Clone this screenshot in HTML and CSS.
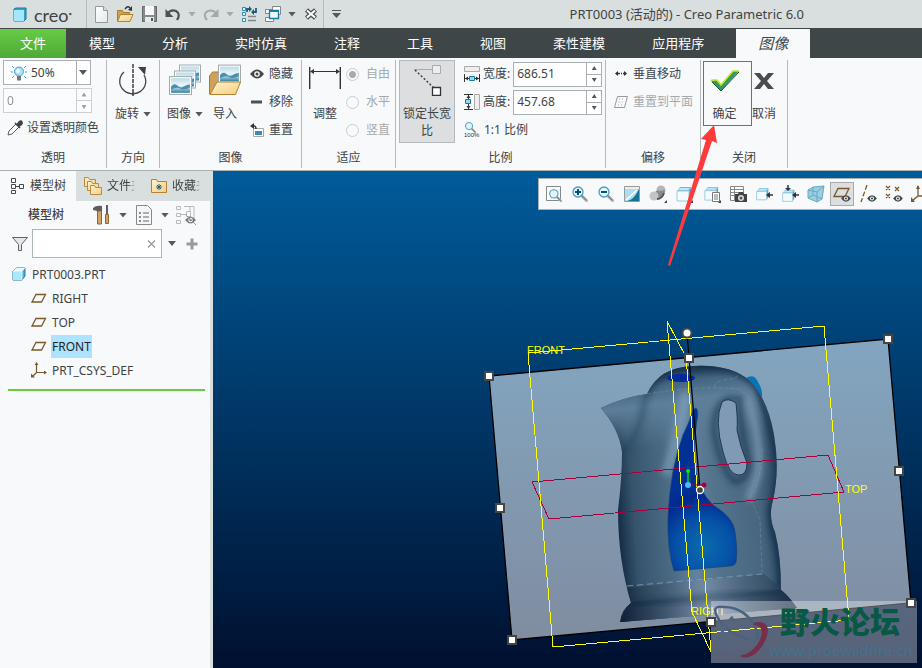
FILE: index.html
```html
<!DOCTYPE html>
<html lang="zh-CN">
<head>
<meta charset="utf-8">
<title>PRT0003 (活动的) - Creo Parametric 6.0</title>
<link rel="stylesheet" href="styles.css">
</head>
<body>
<svg class="defs" aria-hidden="true">
  <defs>
    <linearGradient id="landscape" x1="0" y1="0" x2="0" y2="1">
      <stop offset="0" stop-color="#b9dcea"/><stop offset=".5" stop-color="#eef6f8"/><stop offset="1" stop-color="#2f7fa3"/>
    </linearGradient>
    <linearGradient id="paper" x1="0" y1="0" x2="1" y2="1">
      <stop offset="0" stop-color="#fff"/><stop offset="1" stop-color="#e4eaec"/>
    </linearGradient>
    <linearGradient id="folder" x1="0" y1="0" x2="1" y2="1">
      <stop offset="0" stop-color="#fff3cf"/><stop offset="1" stop-color="#f3cd80"/>
    </linearGradient>
    <symbol id="photo" viewBox="0 0 22 18">
      <rect x=".5" y=".5" width="21" height="17" fill="#fff" stroke="#a5a9ab"/>
      <rect x="2" y="2" width="18" height="14" fill="url(#landscape)"/>
      <path d="M2 10q3-4 6-1t6 1 6-2v3q-5 3-9 1t-9 1z" fill="#4a8fae"/>
    </symbol>
    <symbol id="cube" viewBox="0 0 16 16">
      <path d="M2 5l3-3h9v8l-3 4H2z" fill="#4fb4db" stroke="#1d7ea5"/>
      <path d="M2 5h9v9H2z" fill="#aee6fb"/><path d="M2 5l3-3h9l-3 3z" fill="#e2f7ff"/>
      <path d="M2 5h9v9M11 5l3-3" fill="none" stroke="#fff" stroke-width=".7"/>
    </symbol>
    <symbol id="plane" viewBox="0 0 16 16">
      <path d="M5 4.500h9.500l-4 7.500H1z" fill="none" stroke="#7a5a2a" stroke-width="1.300"/>
    </symbol>
    <symbol id="eye" viewBox="0 0 14 10">
      <path d="M0 5q7-9 14 0-7 9-14 0z" fill="#434849"/><circle cx="7" cy="5" r="2.800" fill="#fff"/><circle cx="7" cy="5" r="1.500" fill="#434849"/>
    </symbol>
    <symbol id="lens" viewBox="0 0 18 18">
      <path d="M10.500 10.500l5 5" stroke="#a8adaf" stroke-width="3" stroke-linecap="round"/>
      <path d="M10 10l5 5" stroke="#777" stroke-width="1"/>
      <circle cx="7" cy="7" r="5" fill="#dff4fd" stroke="#4b9dbd" stroke-width="1.300"/>
    </symbol>
    <symbol id="block" viewBox="0 0 18 18">
      <path d="M2 6l3-4h11l-2 4v10H2z" fill="#6cbbd8"/><path d="M16 2v11l-2 3V6z" fill="#58a4c2"/><path d="M2 6h12v10H2z" fill="#f4fbfe" stroke="#9ccbdc"/><path d="M3 5l2-2h10l-2 2z" fill="#c2e8f5"/>
    </symbol>
  </defs>
</svg>

<div class="app">
  <header class="titlebar">
    <div class="brand">
      <svg class="i16" viewBox="0 0 16 16"><path d="M2 3l2-1h10v11l-2 2H2z" fill="#3aa0c6" stroke="#17799f"/><path d="M2 4h10v11H2z" fill="#a5e6ff"/></svg>
      <span class="brand-name">creo<sup>•</sup></span>
    </div>
    <div class="quick">
      <button class="qb" aria-label="新建"><svg class="i18" viewBox="0 0 18 18"><path d="M3.500 1.500h8l4 4v12h-12z" fill="url(#paper)" stroke="#94999b"/><path d="M11.500 1.500v4h4" fill="#ddd" stroke="#94999b"/></svg></button>
      <button class="qb" aria-label="打开"><svg class="i18" viewBox="0 0 18 18"><path d="M1.500 16V5.500h5l1 2h6V16z" fill="#d3a04f" stroke="#a97b31"/><path d="M1.500 16.500l3-7h12.500l-3 7z" fill="url(#folder)" stroke="#b38334"/><path d="M9 4q3-4 5-1" fill="none" stroke="#333" stroke-width="1.500"/><path d="M12 5l4 1V1z" fill="#333"/></svg></button>
      <button class="qb" aria-label="保存"><svg class="i18" viewBox="0 0 18 18"><path d="M2.500 1.500h14v15h-14z" fill="#868b8d" stroke="#63686a"/><path d="M5 1h9v9H5z" fill="#f7f7f7"/><path d="M5 12h9v5H5z" fill="#e6e9ea"/><path d="M11 13h2v3h-2z" fill="#555"/></svg></button>
      <button class="qb" aria-label="撤消"><svg class="i18" viewBox="0 0 18 18"><path d="M3 9q4-5 9-3 5 3 1 9" fill="none" stroke="#4c5153" stroke-width="2.200"/><path d="M1.500 4v8h8z" fill="#4c5153"/></svg></button>
      <button class="qc" aria-label="撤消列表"><i class="caret soft"></i></button>
      <button class="qb" aria-label="重做"><svg class="i18" viewBox="0 0 18 18"><path d="M15 9q-4-5-9-3-6 3-1 9" fill="none" stroke="#a3a9aa" stroke-width="2"/><path d="M16.500 4v8h-8z" fill="#a3a9aa"/></svg></button>
      <button class="qc" aria-label="重做列表"><i class="caret soft"></i></button>
      <button class="qb" aria-label="重新生成"><svg class="i18" viewBox="0 0 18 18"><path d="M2.500 2.500h3v3h-3zM2.500 7.500h3v3h-3zM2.500 13.500h3v3h-3z" fill="#e8f8ff" stroke="#2a8db5"/><path d="M8 11.500h8M8 15.500h8" stroke="#83888a" stroke-width="1.300"/><path d="M7 7V4h3M16 3v4h-3" fill="none" stroke="#16617f" stroke-width="1.800"/><path d="M9 1l3 3-3 3zM14 4l-3 3 3 3z" fill="#16617f"/></svg></button>
      <button class="qb" aria-label="窗口"><svg class="i18" viewBox="0 0 18 18"><path d="M8.500 1.500h8v8h-8zM1.500 4.500h6v4h-6zM1.500 12.500h8v4h-8z" fill="#fff" stroke="#83888a"/><path d="M5.500 5.500h9v8h-9z" fill="#eaf8ff" stroke="#1b7ba1" stroke-width="1.300"/><path d="M5 5h10v2H5z" fill="#1b7ba1"/></svg></button>
      <button class="qc" aria-label="窗口列表"><i class="caret"></i></button>
      <button class="qb" aria-label="关闭"><svg class="i18" viewBox="0 0 18 18"><path d="M4.500 5l9 8M13.500 5l-9 8" stroke="#4c5153" stroke-width="4.500"/><path d="M5 5.500l8 7M13 5.500l-8 7" stroke="#fff" stroke-width="2"/></svg></button>
      <button class="qc more" aria-label="自定义快速访问工具栏"><i class="caret bar"></i></button>
    </div>
    <h1 class="title">PRT0003 (活动的) - Creo Parametric 6.0</h1>
  </header>

  <nav class="tabs">
    <a class="tab file" href="#">文件</a><a class="tab" href="#">模型</a><a class="tab" href="#">分析</a><a class="tab" href="#">实时仿真</a><a class="tab" href="#">注释</a><a class="tab" href="#">工具</a><a class="tab" href="#">视图</a><a class="tab" href="#">柔性建模</a><a class="tab" href="#">应用程序</a><a class="tab active" href="#">图像</a>
  </nav>

  <section class="ribbon">
    <div class="group">
      <div class="rows">
        <div class="combo">
          <svg class="i16" viewBox="0 0 16 16"><circle cx="8" cy="6.500" r="4.500" fill="#a9e2fa" stroke="#3ba6d2"/><circle cx="7" cy="6" r="2" fill="#fff"/><path d="M6 11h4v4.500H6z" fill="#777"/><path d="M1 1l2 2M0 7h2M15 1l-2 2M16 7h-2M1 13l2-2M15 13l-2-2" stroke="#3ba6d2"/></svg>
          <select aria-label="透明度"><option>50%</option></select><i class="caret"></i>
        </div>
        <div class="spin off"><input aria-label="数值" value="0" disabled><span class="arrows"><button aria-label="增加" disabled></button><button aria-label="减少" disabled></button></span></div>
        <button class="small wide"><svg class="i18" viewBox="0 0 18 18"><path d="M2 16l1-4 7-7 3 3-7 7z" fill="#fff" stroke="#55595b"/><path d="M9 4l5 5M11 6l2-3q2-2 3 0t-3 4z" fill="#3e4345" stroke="#3e4345" stroke-width="1.500"/></svg>设置透明颜色</button>
      </div>
      <h2>透明</h2>
    </div>
    <div class="group">
      <div class="bigs mid">
        <button class="big"><svg class="i32" viewBox="0 0 32 32"><path d="M7 8A13 12.500 0 1 0 27 11" fill="none" stroke="#44494b" stroke-width="1.300"/><path d="M16 0v32" stroke="#222" stroke-width="1.300" stroke-dasharray="4 1"/><path d="M21 3h8l-1 8z" fill="#3e4345"/></svg><span>旋转<i class="caret"></i></span></button>
      </div>
      <h2>方向</h2>
    </div>
    <div class="group">
      <div class="bigs pics">
        <button class="big"><svg class="i32" viewBox="0 0 32 32"><use href="#photo" x="10" y="0" width="22" height="19"/><use href="#photo" x="5" y="6" width="22" height="19"/><use href="#photo" x="0" y="12" width="23" height="19"/></svg><span>图像<i class="caret"></i></span></button>
        <button class="big"><svg class="i32" viewBox="0 0 32 32"><path d="M.5 30V12l3-4h6l2 3v19z" fill="#cfa25c" stroke="#a97b31"/><use href="#photo" x="9" y="0" width="23" height="20"/><path d="M1 30.500l7-12.500h23.500l-5 12.500z" fill="url(#folder)" stroke="#b38334"/></svg><span>导入</span></button>
        <div class="rows list">
          <button class="small"><svg class="i14" viewBox="0 0 14 14"><use href="#eye" y="2" width="14" height="10"/></svg>隐藏</button>
          <button class="small"><svg class="i14" viewBox="0 0 14 14"><path d="M1 5.500h11v3H1z" fill="#4c5153"/></svg>移除</button>
          <button class="small"><svg class="i14" viewBox="0 0 14 14"><path d="M3.500 5.500h10v8h-10z" fill="#fff" stroke="#a5a9ab"/><path d="M5 8h7v4H5z" fill="#3d8cae"/><path d="M6 6q0-4-4-3" fill="none" stroke="#333" stroke-width="1.500"/><path d="M0 3l4-3v6z" fill="#333"/></svg>重置</button>
        </div>
      </div>
      <h2>图像</h2>
    </div>
    <div class="group">
      <div class="bigs fit">
        <button class="big"><svg class="i32" viewBox="0 0 32 32"><path d="M.7 3v22M31.300 3v22" stroke="#333" stroke-width="1.400"/><path d="M2 7.500h28" stroke="#333"/><path d="M1 7.500l4-2.500v5zM31 7.500L27 5v5z" fill="#333"/></svg><span>调整</span></button>
        <div class="rows">
          <label class="radio"><input type="radio" name="fit" checked disabled>自由</label>
          <label class="radio"><input type="radio" name="fit" disabled>水平</label>
          <label class="radio"><input type="radio" name="fit" disabled>竖直</label>
        </div>
      </div>
      <h2>适应</h2>
    </div>
    <div class="group">
      <div class="bigs ratio">
        <button class="big lock" aria-pressed="true"><svg class="i32" viewBox="0 0 32 32"><path d="M3 5.500h19" stroke="#aaa"/><path d="M4 6l20 19" stroke="#444" stroke-width="1.500" stroke-dasharray="2 2"/><path d="M21.500 1.500h8v8h-8z" fill="#eee" stroke="#aaa"/><path d="M21.500 23.500h8v8h-8z" fill="#fff" stroke="#333" stroke-width="1.300"/></svg><span>锁定长宽<br>比</span></button>
        <div class="rows">
          <div class="field"><svg class="i16" viewBox="0 0 16 16"><path d="M.5.5h15v5H.5z" fill="#eee" stroke="#aaa"/><path d="M.5 8v8M15.500 8v8M1 12.500h14" stroke="#333"/><path d="M1 12.500l3-2v4zM15 12.500l-3-2v4z" fill="#333"/><path d="M5.500 10.500h5v4h-5z" fill="#8edaf5" stroke="#1978a0"/></svg><label for="w">宽度:</label><div class="spin"><input id="w" value="686.51"><span class="arrows"><button aria-label="增加宽度"></button><button aria-label="减少宽度"></button></span></div></div>
          <div class="field"><svg class="i16" viewBox="0 0 16 16"><path d="M10.500.5h5v15h-5z" fill="#eee" stroke="#aaa"/><path d="M0 .5h9M0 15.500h9M4.500 1v14" stroke="#333"/><path d="M4.500 1l2 3h-4zM4.500 15l2-3h-4z" fill="#333"/><path d="M1.500 5.500h5v4h-5z" fill="#8edaf5" stroke="#1978a0"/></svg><label for="h">高度:</label><div class="spin"><input id="h" value="457.68"><span class="arrows"><button aria-label="增加高度"></button><button aria-label="减少高度"></button></span></div></div>
          <button class="small one"><svg class="i16" viewBox="0 0 16 16"><use href="#lens" x="0" y="-1" width="13" height="13"/><text x="0" y="15" class="pct">100%</text></svg>1:1 比例</button>
        </div>
      </div>
      <h2>比例</h2>
    </div>
    <div class="group">
      <div class="rows offset">
        <button class="small"><svg class="i14" viewBox="0 0 14 14"><path d="M2 6.500h10" stroke="#333" stroke-width="1.300" stroke-dasharray="4 1 1 1"/><path d="M1 6.500L4 4v5zM13 6.500L10 4v5z" fill="#333"/></svg>垂直移动</button>
        <button class="small" disabled><svg class="i14" viewBox="0 0 14 14"><path d="M3.500 1.500h10l-3 11H.500z" fill="none" stroke="#999"/><path d="M5 4h6M4.500 7h6M4 10h6" stroke="#aaa" stroke-dasharray="1 2"/></svg>重置到平面</button>
      </div>
      <h2>偏移</h2>
    </div>
    <div class="group">
      <div class="bigs close">
        <button class="big ok"><svg class="i32" viewBox="0 -3 32 32"><path d="M2 14l5-1 5 5L24 4h6L12 24z" fill="#339966"/><path d="M2 14l1-1h5l4 5L24 4h6" fill="none" stroke="#c6e81a" stroke-width="1.500"/><path d="M3 15l9 9L30 5" fill="none" stroke="#1a5a35"/></svg><span>确定</span>
          <svg class="arrow" viewBox="0 0 50 142"><path d="M45 0l3 18-5-2L1 141l-2-1L37 15l-5-1z" fill="#fe3a3a"/></svg></button>
        <button class="big cancel"><svg class="i24" viewBox="4 -3 24 32"><path d="M6 6h6l4 5 4-5h6l-7 8 7 8h-6l-4-5-4 5H6l7-8z" fill="#4a4d4f"/></svg><span>取消</span></button>
      </div>
      <h2>关闭</h2>
    </div>
  </section>

  <main class="work">
    <aside class="side">
      <div class="side-tabs">
        <a class="side-tab on" href="#"><svg class="i16" viewBox="0 0 16 16"><path d="M3.500.5h4v4h-4zM3.500 6.500h4v4h-4zM3.500 12.500h4v3h-4zM11.500 6.500h4v4h-4z" fill="#fff" stroke="#44494b"/><path d="M8 8.500h3" stroke="#44494b"/></svg><span>模型树</span></a>
        <a class="side-tab" href="#"><svg class="i20" viewBox="0 0 20 20"><g fill="url(#folder)" stroke="#b88b43"><path d="M1.500 10.500v-9h4l1 2h6v7z"/><path d="M4.500 14.500v-9h4l1 2h6v7z"/><path d="M7.500 18.500v-9h4l1 2h6v7z"/></g></svg><span class="fade">文件夹</span></a>
        <a class="side-tab" href="#"><svg class="i18" viewBox="0 0 18 18"><path d="M1.500 15.500v-13h5l1 2h9v11z" fill="url(#folder)" stroke="#b38334"/><path d="M9 7v6M6 10h6M7 8l4 4M11 8l-4 4" stroke="#12638a"/></svg><span class="fade">收藏夹</span></a>
      </div>
      <div class="tree-head">
        <strong>模型树</strong>
        <button class="tb" aria-label="设置"><svg class="i20" viewBox="0 0 20 20"><path d="M1 3q3-3 9-2v5H5L1 5z" fill="#5b5f61"/><path d="M5.500 6h4v13h-4z" fill="#d3a468" stroke="#8e6633"/><path d="M14 0h2v9h-2z" fill="#5b5f61"/><path d="M13.500 9.500h3v9h-3z" fill="#d3a468" stroke="#8e6633"/></svg></button><i class="caret"></i>
        <button class="tb" aria-label="显示"><svg class="i20" viewBox="0 0 20 20"><path d="M2.500.5h11l4 4v15h-15z" fill="#f4f6f7" stroke="#85898b"/><path d="M5.500 7.500h1v1h-1zM5.500 11.500h1v1h-1zM5.500 15.500h1v1h-1z" fill="none" stroke="#666"/><path d="M9 8h6M9 12h6M9 16h6" stroke="#666"/></svg></button><i class="caret"></i>
        <button class="tb" aria-label="隐藏树列"><svg class="i20" viewBox="0 0 20 20"><path d="M.5 1.500h4v3h-4zM.5 8.500h4v3h-4zM.5 15.500h4v3h-4zM5 9.500h5M10.500 6.500h4v5h-4zM8 1.500h10v12M14 1v6" fill="none" stroke="#b7bbbd"/><use href="#eye" x="9" y="11" width="11" height="8" opacity=".7"/><path d="M9 9l11 11" stroke="#999"/></svg></button>
      </div>
      <div class="filter">
        <svg class="i18" viewBox="0 0 18 18"><path d="M1.500 2.500h15l-6 7v6h-3v-6z" fill="#e4e7e8" stroke="#5f6466"/></svg>
        <div class="search"><input type="text" aria-label="搜索"><button aria-label="清除"><svg class="i14" viewBox="0 0 14 14"><path d="M3 3.500l7 7M10 3.500l-7 7" stroke="#999" stroke-width="1.300"/></svg></button></div>
        <i class="caret"></i>
        <button class="tb plus" aria-label="添加"><svg class="i14" viewBox="0 0 14 14"><path d="M5.500 1.500h3v4h4v3h-4v4h-3v-4h-4v-3h4z" fill="#999"/></svg></button>
      </div>
      <ul class="tree">
        <li class="root"><svg class="i16"><use href="#cube"/></svg><span>PRT0003.PRT</span></li>
        <li><svg class="i16"><use href="#plane"/></svg><span>RIGHT</span></li>
        <li><svg class="i16"><use href="#plane"/></svg><span>TOP</span></li>
        <li><svg class="i16"><use href="#plane"/></svg><span class="sel">FRONT</span></li>
        <li><svg class="i16" viewBox="0 0 16 16"><path d="M5.500 2v8.500H15M5.500 10.500l-4 4" fill="none" stroke="#7a5a2a" stroke-width="1.200"/><path d="M5.500 0l2 3h-4zM16 10.500l-3-2v4zM0 15.500v-4l4 4z" fill="#7a5a2a"/></svg><span>PRT_CSYS_DEF</span></li>
      </ul>
      <div class="insert-line"></div>
    </aside>

    <section class="view">
      <svg class="scene" viewBox="213 171 709 497" preserveAspectRatio="xMidYMid slice">
        <defs>
          <linearGradient id="sheet" x1="0" y1="0" x2="0" y2="1"><stop offset="0" stop-color="#83a5c0"/><stop offset="1" stop-color="#808da0"/></linearGradient>
          <linearGradient id="body" gradientUnits="userSpaceOnUse" x1="616" y1="500" x2="782" y2="488">
            <stop offset="0" stop-color="#142c45"/><stop offset=".1" stop-color="#36536c"/><stop offset=".3" stop-color="#4a6a83"/><stop offset=".45" stop-color="#6283a0"/><stop offset=".6" stop-color="#53728b"/><stop offset=".85" stop-color="#48667f"/><stop offset="1" stop-color="#2b4863"/>
          </linearGradient>
          <linearGradient id="dome" gradientUnits="userSpaceOnUse" x1="690" y1="366" x2="700" y2="440"><stop offset="0" stop-color="#18344c"/><stop offset=".2" stop-color="#456681"/><stop offset=".45" stop-color="#5e7f9a"/><stop offset="1" stop-color="#5e7f9a" stop-opacity="0"/></linearGradient>
          <linearGradient id="low" gradientUnits="userSpaceOnUse" x1="620" y1="600" x2="795" y2="590"><stop offset="0" stop-color="#0f2137"/><stop offset=".25" stop-color="#3d546c"/><stop offset=".5" stop-color="#7d90ab"/><stop offset=".7" stop-color="#4b637b"/><stop offset="1" stop-color="#182b42"/></linearGradient>
          <radialGradient id="water" gradientUnits="userSpaceOnUse" cx="704" cy="547" r="62"><stop offset="0" stop-color="#0a6cac"/><stop offset=".45" stop-color="#0551a8"/><stop offset=".8" stop-color="#012a90"/><stop offset="1" stop-color="#013195"/></radialGradient>
          <filter id="soft" x="-20%" y="-20%" width="140%" height="140%"><feGaussianBlur stdDeviation="3"/></filter>
          <clipPath id="kettle"><path d="M601 408Q624 397 647 394Q659 367 693 366Q731 364 750 381Q768 400 774 435Q780 470 773 500Q768 517 775 532Q781 556 781 590Q790 597 797 608L620 622Q621 610 631 603Q618 560 618 510Q622 478 622 452Q619 429 601 408z"/></clipPath>
        </defs>
        <path d="M489 376L888 339 911 603 512 640z" fill="url(#sheet)" stroke="#000" stroke-width="1.300"/>
        <path d="M746 378q8-5 12 4 5 8 4 16l-9-9z" fill="#0874b8"/>
        <g clip-path="url(#kettle)">
          <path d="M595 360h210v265H595z" fill="url(#body)"/>
          <path d="M595 350H805V450H595z" fill="url(#dome)"/>
          <g filter="url(#soft)" fill="none">
            <path d="M645 398Q641 435 622 453" stroke="#203f59" stroke-width="7" opacity=".45"/>
            <path d="M646 396Q656 370 690 366" stroke="#17334c" stroke-width="5"/>
            <path d="M686 392Q678 440 666 475" stroke="#8dabc5" stroke-width="10" opacity=".55"/>
            <path d="M693 366Q736 364 756 385Q774 425 778 470Q775 500 770 512" stroke="#122f4a" stroke-width="6"/>
            <path d="M748 398Q762 445 758 474Q752 492 748 500" stroke="#7593ad" stroke-width="7"/>
            <path d="M740 396Q740 440 750 463Q748 480 734 482Q719 465 714 430Q715 396 736 398" stroke="#1b3750" stroke-width="4"/>
            <path d="M774 500Q768 515 776 540Q782 570 780 590" stroke="#152e49" stroke-width="7"/>
          </g>
          <path d="M627 588L764 574 784 590 800 612 618 626 629 603z" fill="url(#low)" opacity=".65"/>
          <path d="M631 602Q720 594 783 590L800 612 618 626z" fill="url(#low)"/>
          <g filter="url(#soft)"><path d="M631 604Q720 596 785 592" fill="none" stroke="#10253b" stroke-width="4" opacity=".6"/></g>
        </g>
        <path d="M722 402Q728 397 736 403Q738 420 737 430Q740 446 747 463Q747 476 738 475Q729 475 723 452Q714 420 722 402z" fill="#8099b4" stroke="#1c3752"/>
        <ellipse cx="681" cy="378" rx="14" ry="4" fill="#042b9b"/>
        <path d="M696 408Q699 411 697 420Q693 440 694 460Q697 490 713 505Q734 518 735 532Q738 552 736 562Q735 566 730 566L674 571Q667 548 668 517Q670 470 683 435Q690 421 693 410z" fill="url(#water)" stroke="#1b4275" stroke-width=".7"/>
        <path d="M647 394Q700 385 738 389Q748 395 751 401M714 387q2-6 10-7l12-2 3-5M762 448q0 31-12 50l10 22 2 52" fill="none" stroke="#8aa0b4" stroke-width=".5" stroke-dasharray="4 2" opacity=".7"/>
        <path d="M627 586L762 574" stroke="#8d9db0" stroke-width=".8" stroke-dasharray="6 4"/>
        <g fill="none" stroke="#a8003c" shape-rendering="crispEdges"><path d="M532 482L828 455 844 492 549 519z"/></g>
        <path d="M687 333L700 490" stroke="#000" stroke-width="1.300"/>
        <g fill="none" stroke="#ff0" shape-rendering="crispEdges"><path d="M528 353L824 326 849 620 553 647z"/><path d="M667 321L686 357 711 652 692 612z"/></g>
        <path d="M688 485V471" stroke="#0f0" stroke-width="1.200"/><path d="M688 485h16" stroke="#a8003c"/>
        <circle cx="688" cy="471" r="2" fill="#0e0"/><circle cx="704" cy="485" r="2.500" fill="#a8003c"/><circle cx="688" cy="485" r="3" fill="#55b4ff"/>
        <g class="plane-names"><text x="527" y="354">FRONT</text><text x="845" y="493">TOP</text><text x="691" y="615">RIGHT</text></g>
        <path d="M711 601h206v62H711z" fill="#fff" opacity=".34"/>
        <g fill="none">
          <path d="M722 607C708 604 718 624 733 633 750 642 761 642 757 632 752 616 738 606 722 607" stroke="#4a6280" stroke-width="2.500"/>
          <path d="M733 617C720 628 717 644 728 648 738 650 749 644 756 636" stroke="#56657e" stroke-width="3"/>
          <path d="M741 656C756 660 766 640 767 631 767 623 760 622 754 624 766 625 764 636 758 645 752 653 746 656 741 656z" fill="#76304c" stroke="#76304c" stroke-width="2"/>
        </g>
        <text x="780" y="633" class="mark">野火论坛</text>
        <text x="769" y="656" class="url">www.proewildfire.cn</text>
        <g fill="#fff" stroke="#454545" stroke-width="2"><path d="M485 372h8v8h-8zM884 335h8v8h-8zM907 599h8v8h-8zM508 636h8v8h-8zM685 354h8v8h-8zM895 467h8v8h-8zM707 618h8v8h-8zM496 504h8v8h-8z"/><circle cx="687" cy="333" r="4.500"/></g>
        <circle cx="700" cy="490" r="3.500" fill="#454545" stroke="#fff" stroke-width="1.300"/>
      </svg>

      <div class="viewbar">
        <button aria-label="重新调整"><svg class="i18" viewBox="0 0 18 18"><path d="M1.500 1.500h14v14h-14z" fill="#fff" stroke="#888"/><use href="#lens" x="3" y="3" width="15" height="15"/></svg></button>
        <button aria-label="放大"><svg class="i18" viewBox="0 0 18 18"><use href="#lens" width="18" height="18"/><path d="M4 7h6M7 4v6" stroke="#064f76" stroke-width="2"/></svg></button>
        <button aria-label="缩小"><svg class="i18" viewBox="0 0 18 18"><use href="#lens" width="18" height="18"/><path d="M4 7h6" stroke="#064f76" stroke-width="2"/></svg></button>
        <button aria-label="重画"><svg class="i18" viewBox="0 0 18 18"><path d="M1.500 1.500h15v15h-15z" fill="#eee" stroke="#999"/><path d="M2 4h14v12H2z" fill="#aadff2"/><path d="M16 4v12H4q7-1 12-12z" fill="#176f96"/><path d="M3 15L14 5" stroke="#fff" stroke-width="1.500"/></svg></button>
        <button aria-label="渲染选项"><svg class="i18" viewBox="0 0 18 18"><circle cx="12" cy="5" r="4.500" fill="#b5b5b5"/><path d="M5 9q2-5 6-3l5-1q0 7-7 8z" fill="#8a8a8a"/><circle cx="5" cy="11" r="4.500" fill="#c4c4c4"/><path d="M8 14q5 0 7-6" fill="none" stroke="#555" stroke-width="2"/><path d="M18 15v3h-3z" fill="#444"/></svg></button>
        <button aria-label="显示样式"><svg class="i18" viewBox="0 0 18 18"><use href="#block" width="18" height="18"/><path d="M18 15v3h-3z" fill="#444"/></svg></button>
        <button class="next" aria-label="已保存方向"><svg class="i18" viewBox="0 0 18 18"><use href="#block" width="17" height="17"/><path d="M9.500 7.500h7v9h-7z" fill="#fff" stroke="#777"/><path d="M11 10h4M11 12h4M11 14h4" stroke="#777"/><path d="M18 15v3h-3z" fill="#444"/></svg></button>
        <button aria-label="视图管理器"><svg class="i18" viewBox="0 0 18 18"><path d="M1.500 1.500h13v14h-13zM5.500 1v14M1 4.500h14M1 7.500h14M1 10.500h14" fill="#fff" stroke="#888"/><path d="M6 9h3l1-2h4l1 2h3v8H6z" fill="#3e4345"/><circle cx="12" cy="13" r="3" fill="#ddd"/><circle cx="12" cy="13" r="1.500" fill="#555"/></svg></button>
        <button aria-label="透视图"><svg class="i18" viewBox="0 0 18 18"><use href="#block" width="15" height="18"/><path d="M13 10h5" stroke="#333" stroke-width="1.500"/><path d="M11 10l4-3v6z" fill="#333"/></svg></button>
        <button aria-label="方向"><svg class="i18" viewBox="0 0 18 18"><use href="#block" y="3" width="15" height="15"/><path d="M13 10h5M7 0v4" stroke="#333" stroke-width="1.500"/><path d="M11 10l4-3v6zM7 6L4 3h6z" fill="#333"/></svg></button>
        <button aria-label="截面"><svg class="i18" viewBox="0 0 18 18"><path d="M1 5l5-3 11-1-2 13-5 3-9-4z" fill="#9acfe2" stroke="#6aa9c0"/><path d="M1 5l9 2 7-6M10 7v10M6 2v8l-5 3M6 10l9 4" fill="none" stroke="#6aa9c0"/></svg></button>
        <button class="pressed" aria-label="平面显示" aria-pressed="true"><svg class="i18" viewBox="0 0 18 18"><path d="M5 3.500h11l-4 8H1z" fill="none" stroke="#7a5a2a" stroke-width="1.300"/><use href="#eye" x="8" y="10" width="10" height="7"/></svg></button>
        <button aria-label="轴显示"><svg class="i18" viewBox="0 0 18 18"><path d="M8 0L2 17" stroke="#7a5a2a" stroke-width="1.300" stroke-dasharray="5 2"/><use href="#eye" x="8" y="10" width="10" height="7"/></svg></button>
        <button aria-label="点显示"><svg class="i18" viewBox="0 0 18 18"><path d="M1 1l4 4m0-4L1 5M10 2l4 4m0-4l-4 4M1 9l4 4m0-4l-4 4" stroke="#7a5a2a" stroke-width="1.200"/><use href="#eye" x="8" y="10" width="10" height="7"/></svg></button>
        <button aria-label="坐标系显示"><svg class="i18" viewBox="0 0 18 18"><path d="M7 1v10h10M7 11l-6 5" fill="none" stroke="#7a5a2a" stroke-width="1.300"/><path d="M7 0l2 4H5zM0 17v-5l4 5z" fill="#7a5a2a"/></svg></button>
      </div>
    </section>
  </main>
</div>
</body>
</html>
```

FILE: styles.css
```css
* { box-sizing: border-box; }
body {
  margin: 0;
  font: 12px/18px "Noto Sans", "Noto Sans CJK SC", sans-serif;
  color: #3e4345;
}
button, input, select { font: inherit; color: inherit; margin: 0; }
button { border: 0; padding: 0; background: none; }
a { color: inherit; text-decoration: none; }
svg { display: block; flex: none; }
.defs { position: absolute; width: 0; height: 0; }
.i14 { width: 14px; height: 14px; }
.i16 { width: 16px; height: 16px; }
.i18 { width: 18px; height: 18px; }
.i20 { width: 20px; height: 20px; }
.i24 { width: 24px; height: 32px; }
.i32 { width: 32px; height: 32px; }
.caret {
  flex: none;
  width: 8px;
  height: 5px;
  background: #54595b;
  clip-path: polygon(0 0, 100% 0, 50% 100%);
}
.caret.soft { background: #a3a9aa; }
.caret.bar { height: 8px; width: 9px; clip-path: polygon(0 0, 100% 0, 100% 1px, 0 1px, 0 3px, 100% 3px, 50% 100%, 0 3px); }

.app { display: flex; flex-direction: column; min-height: 100vh; overflow: hidden; }

/* title bar */
.titlebar { display: flex; height: 28px; background: #d9dfde; }
.brand { display: flex; align-items: center; gap: 6px; width: 87px; padding-left: 12px; border-right: 1px solid #b5babb; }
.brand-name { font: 18px/24px Lato, sans-serif; color: #3e4345; }
.brand-name sup { font-size: 6px; vertical-align: 6px; }
.quick { display: flex; padding-left: 2px; }
.qb, .qc { display: flex; align-items: center; justify-content: center; width: 24px; }
.qc { width: 14px; }
.qc.more { border-left: 1px solid #b5babb; width: 26px; }
.title { margin: 0 0 0 auto; padding-right: 118px; font-size: 13px; font-weight: 400; line-height: 28px; white-space: nowrap; }

/* ribbon tabs */
.tabs { display: flex; height: 30px; padding-top: 1px; background: #3e4648; color: #fff; font-size: 13px; line-height: 29px; }
.tab { padding: 0 24px 0 23px; white-space: nowrap; }
.tab.file { padding: 0 20px; background: linear-gradient(#66cc45, #4ea936); }
.tab.active { margin-left: 8px; padding: 0 22px; background: #f7f9fb; color: #3e4345; font-size: 15px; font-style: italic; }

/* ribbon */
.ribbon {
  display: grid;
  grid-template-columns: 107px 53px 142px 94px 210px 95px 87px;
  height: 113px;
  background: #f7f9fb;
  border-bottom: 1px solid #a9b1b3;
}
.group { display: flex; flex-direction: column; justify-content: space-between; margin: 2px 0; border-right: 1px solid #b4b9bb; }
.group h2 { margin: 0; font-size: 12px; font-weight: 400; line-height: 20px; text-align: center; }
.rows { display: flex; flex-direction: column; }
.small, .radio, .field { display: flex; align-items: center; height: 28px; gap: 4px; white-space: nowrap; }
.small.wide { padding-left: 6px; gap: 3px; }
.small:disabled { color: #a6aaac; }
.combo { display: flex; align-items: center; gap: 4px; width: 88px; height: 25px; margin: 0 0 3px 3px; padding: 0 3px 0 7px; border: 1px solid #aab0b2; background: linear-gradient(90deg, #fff 72px, #aab0b2 72px, #aab0b2 73px, #fff 73px); }
.combo select { flex: 1; min-width: 0; appearance: none; border: 0; background: none; padding: 0; }
.spin { display: flex; width: 89px; height: 25px; border: 1px solid #aab0b2; background: #fff; }
.spin input { flex: 1; min-width: 0; border: 0; padding: 0 3px; background: none; }
.spin.off { margin: 0 0 1px 3px; opacity: .55; }
.arrows { display: flex; flex-direction: column; width: 15px; border-left: 1px solid #aab0b2; }
.arrows button { display: flex; flex: 1; align-items: center; justify-content: center; }
.arrows button + button { border-top: 1px solid #aab0b2; }
.arrows button::before { content: ""; width: 5px; height: 4px; background: #54595b; clip-path: polygon(50% 0, 100% 100%, 0 100%); }
.arrows button + button::before { transform: scaleY(-1); }

.bigs { display: flex; align-items: flex-start; height: 84px; }
.big { display: flex; flex-direction: column; align-items: center; gap: 9px; padding-top: 4px; line-height: 18px; white-space: nowrap; }
.big span { display: flex; align-items: center; gap: 4px; }
.bigs.mid { justify-content: center; }
.pics { padding-left: 7px; gap: 6px; }
.pics .list { padding-left: 3px; }
.list .small { gap: 5px; }
.fit { padding-left: 7px; gap: 5px; }
.radio { color: #a6aaac; gap: 7px; }
.radio input { appearance: none; width: 13px; height: 13px; margin: 0; border: 1px solid #c9cdce; border-radius: 50%; }
.radio input:checked { background: radial-gradient(#aaa 3px, #f7f9fb 4px); }
.ratio { padding-left: 3px; gap: 9px; }
.big.lock { width: 56px; height: 83px; padding: 3px 0 0; border: 1px solid #b4b8ba; background: #dcdee0; line-height: 17px; }
.big.lock span { display: block; text-align: center; }
.field { gap: 3px; }
.pct { font: 6px "Liberation Sans", sans-serif; fill: #333; }
.offset { padding-left: 8px; }
.offset .small { gap: 5px; }
.close { padding-left: 2px; }
.big.ok { position: relative; z-index: 3; width: 49px; height: 65px; margin-top: 1px; padding: 2px 6px 0 0; border: 1px solid #f33; }
.arrow { position: absolute; left: -35px; top: 63px; width: 50px; height: 142px; overflow: visible; pointer-events: none; }

/* model tree */
.work { display: flex; flex: 1; min-height: 0; }
.side { width: 213px; flex: none; border-right: 3px solid #d9dfde; background: #f7f9fb; }
.side-tabs { display: flex; height: 30px; background: #d9dfde; }
.side-tab { display: flex; align-items: center; gap: 4px; width: 67px; padding-left: 7px; overflow: hidden; white-space: nowrap; }
.side-tab.on { width: 76px; padding-left: 8px; gap: 6px; background: #f7f9fb; }
.fade { overflow: hidden; width: 28px; mask-image: linear-gradient(90deg, #000 80%, transparent); }
.tree-head { display: flex; align-items: center; gap: 7px; height: 28px; padding-left: 28px; }
.tree-head strong { font-weight: 500; width: 57px; }
.tb { display: flex; align-items: center; }
.filter { display: flex; align-items: center; height: 29px; padding-left: 11px; gap: 3px; }
.search { display: flex; align-items: center; width: 130px; height: 29px; margin-right: 3px; padding-right: 2px; border: 1px solid #aab6b8; background: #fff; }
.search input { flex: 1; min-width: 0; border: 0; background: none; }
.tb.plus { margin-left: 6px; }
.tree { margin: 4px 0 0; padding: 0; list-style: none; }
.tree li { display: flex; align-items: center; gap: 4px; height: 24px; padding-left: 31px; }
.tree li.root { padding-left: 11px; gap: 4px; }
.tree span { padding: 0 1px; line-height: 23px; }
.tree .sel { background: #aee3ff; color: #222; }
.insert-line { height: 2px; margin: 7px 5px 0 8px; background: #66cc45; }

/* graphics area */
.view { position: relative; flex: 1; min-width: 0; background: linear-gradient(#005c9b, #001030); }
.scene { position: absolute; inset: 0; width: 100%; height: 100%; }
.plane-names { font: 11px "Liberation Sans", sans-serif; fill: #ff0; }
.mark { font: 900 30px "Noto Sans CJK SC", sans-serif; fill: #075845; }
.url { font: 15px "Noto Sans", sans-serif; fill: #42728f; }
.viewbar { position: absolute; top: 7px; right: 0; display: flex; align-items: center; width: 384px; height: 32px; padding-left: 2px; overflow: hidden; border: 1px solid #a9b1b3; border-right: 0; background: #f7f9fb; }
.viewbar button { display: flex; flex: none; align-items: center; justify-content: center; width: 26px; height: 26px; }
.viewbar .next { margin-left: 2px; }
.viewbar .pressed { width: 24px; height: 24px; margin: 0 1px; border: 1px solid #aaa; background: #dcdee0; }
```
